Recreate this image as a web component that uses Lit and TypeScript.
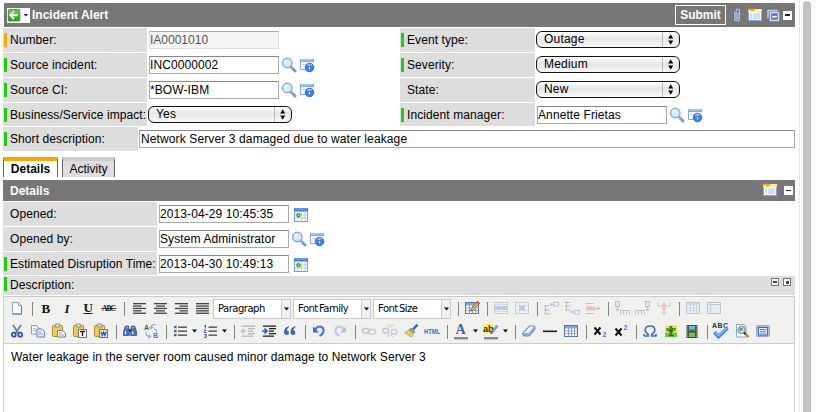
import { LitElement, html, svg, css, nothing, TemplateResult } from "lit";
import { customElement, property } from "lit/decorators.js";

const glyph = (body: unknown, w = 16, h = 16) =>
  html`<svg class="glyph" width=${w} height=${h} viewBox="0 0 ${w} ${h}">${body}</svg>`;

const lines = (rows: number[][], color = "#444") =>
  rows.map(([x, y, w]) => svg`<rect x=${x} y=${y} width=${w} height="1.3" fill=${color} />`);

const page = svg`<path d="M3.500 2.500h6l3 3v8.500h-9z" fill="#fff" stroke="#8aa6d0"/><path d="M9.500 2.500v3h3" fill="#dce8f8" stroke="#8aa6d0"/><path d="M3.500 14h9V6" fill="none" stroke="#5577b0"/>`;
const clipboard = svg`<rect x="1.500" y="2.500" width="10" height="11" rx="1" fill="#f3cb4b" stroke="#b08a2c"/><rect x="4" y="1" width="5" height="3" rx="1" fill="#ddd" stroke="#777" stroke-width=".8"/>`;
const grid = svg`<rect x="1.500" y="2.500" width="13" height="11" fill="#fff" stroke="#5874ad"/><rect x="2" y="3" width="12" height="2.500" fill="#8aa6d8"/><path d="M2 8h12M2 10.700h12M5.500 5v8.500M8.500 5v8.500M11.500 5v8.500" stroke="#7e9ace" stroke-width=".9"/>`;

const icons: Record<string, TemplateResult> = {
  search: glyph(svg`<path d="M9.500 9.500l4.500 4.500" stroke="#7f9cc4" stroke-width="3" stroke-linecap="round"/><path d="M10 10l1.500 1.500" stroke="#c9b7a0" stroke-width="1.500"/><circle cx="6.300" cy="6" r="4.700" fill="#d3ebfd" stroke="#7fabe6" stroke-width="1.400"/><path d="M3.800 5.500q.7-2 2.700-2" stroke="#fff" fill="none" stroke-width="1.300"/>`),
  info: glyph(svg`<path d="M1.500 12.500v-10h13v3M1.500 12.500h5" fill="none" stroke="#86a9dc"/><rect x="1" y="2" width="14" height="3" fill="#7fa8ea"/><path d="M2 3h12" stroke="#c9dcf8"/><path d="M3 7.500h4" stroke="#c5d8f3"/><circle cx="10.500" cy="10.500" r="4.300" fill="#3d7fe6" stroke="#2c68d2" stroke-width=".9"/><path d="M8 8.500q2-2.500 5-.5" stroke="#a9ccfa" fill="none"/><path d="M10.500 10v2.600M10.500 8v1.100" stroke="#d8e8ff" stroke-width="1.300"/>`),
  calendar: glyph(svg`<rect x="1.500" y="1.500" width="13" height="13" fill="#fff" stroke="#7b9fd8"/><rect x="1" y="1" width="14" height="3.500" fill="#4a7fd4"/><path d="M2 2h12" stroke="#88b0ee"/><path d="M2 8h12M2 11h12M5 5v9M8.500 5v9M12 5v9" stroke="#b9cfe9"/><rect x="3.500" y="6.300" width="4" height="4" rx="1" fill="#3e9b2f"/><rect x="5" y="7.600" width="1.400" height="1.400" fill="#c3f0b0"/>`),
  clip: glyph(svg`<path d="M5.500 5v6.500q0 2.500 2.500 2.500t2.500-2.500V4q0-1.800-1.700-1.800T7.100 4v7q0 1 .9 1t.9-1V5.500" fill="none" stroke="#a8c6f0" stroke-width="1.200"/><path d="M4.600 6v6" stroke="#3e5f93" stroke-width=".8"/>`),
  list: glyph(svg`<rect x="1.500" y="2.500" width="13" height="11" fill="#fff" stroke="#7ea8ea"/><rect x="1" y="2" width="14" height="2.800" fill="#ffe99b"/><path d="M1 2.500h7M4 3.500h3" stroke="#f5a623" stroke-width="1.400"/><path d="M3 7h2M6 7h7M3 9h2M6 9h7M3 11h2M6 11h7" stroke="#a9bce8" stroke-width="1.200"/>`),
  stack: glyph(svg`<path d="M3 11.500V3.500h9.500" fill="none" stroke="#b9d2f4" stroke-width="1.500"/><path d="M5.500 13.500v-8h8v8z" fill="#5e7ca6" stroke="#c8dcf7" stroke-width="1.500"/><path d="M7.300 9.700h4.500" stroke="#fff" stroke-width="1.600"/>`),
  back: glyph(svg`<rect width="23" height="15" fill="#fff"/><rect x=".8" y="1" width="12.500" height="12.500" rx="1.500" fill="#35a32a"/><rect x="1.500" y="1.500" width="11" height="5" rx="1" fill="#62bd50"/><path d="M7 3.300L3.200 7.200 7 11M3.500 7.200H11" fill="none" stroke="#fff" stroke-width="1.900"/><path d="M16.500 6h4.500l-2.200 2.600z" fill="#222"/>`, 23, 15),
  updown: glyph(svg`<path d="M2.200 6.500l2.500-4.300 2.500 4.300zM2.200 8.500l2.500 4.300 2.500-4.300z" fill="#000"/>`, 10, 15),
  caret: glyph(svg`<path d="M2 6.500h5l-2.500 3z" fill="#000"/>`, 9, 16),
  doc: glyph(page),
  bold: glyph(svg`<text x="3.500" y="12.500" class="serif b">B</text>`),
  italic: glyph(svg`<text x="5.500" y="12.500" class="serif b i">I</text>`),
  underline: glyph(svg`<text x="3.500" y="11.500" class="serif b">U</text><path d="M3.500 13.500h9" stroke="#222"/>`),
  strike: glyph(svg`<text x="1" y="11" class="serif abc" textLength="14">ABC</text><path d="M0 8.500h15.500" stroke="#222" stroke-width=".8"/>`),
  left: glyph(lines([[2, 3, 13], [2, 5.4, 8.500], [2, 7.8, 13], [2, 10.2, 8.500], [2, 12.600, 13]])),
  center: glyph(lines([[2, 3, 13], [4, 5.4, 9], [2, 7.8, 13], [4, 10.2, 9], [2, 12.600, 13]])),
  right: glyph(lines([[2, 3, 13], [6.500, 5.4, 8.500], [2, 7.8, 13], [6.500, 10.2, 8.500], [2, 12.600, 13]])),
  full: glyph(lines([[2, 3, 13], [2, 5.4, 13], [2, 7.8, 13], [2, 10.2, 13], [2, 12.600, 13]])),
  tableEdit: glyph(svg`${grid}<path d="M6.500 11l1-2.500 6-7 2 1.800-6.200 6.900z" fill="#eeb65c" stroke="#7a4b1e" stroke-width=".8"/><path d="M13.200 1.800l1.900 1.800" stroke="#d43b22" stroke-width="1.600"/>`),
  rowProps: glyph(svg`<rect x="1.500" y="2.500" width="13" height="11" fill="#fff" stroke="#6f86bd"/><path d="M2 4.500h12M2 11.500h12M6 3v3M10 3v3M6 10v3M10 10v3" stroke="#9aabda"/><rect x="2" y="6" width="12" height="4" fill="#5a82d8"/>`),
  cellProps: glyph(svg`<rect x="1.500" y="2.500" width="13" height="11" fill="#fff" stroke="#6f86bd"/><path d="M2 5.500h12M2 10.500h12M5.500 3v10M10.500 3v10" stroke="#9aabda"/><rect x="5.500" y="6" width="5" height="4" fill="#4a78d8"/>`),
  rowBefore: glyph(svg`<path d="M1 5.500h5M1 10h6M1 14h6M2.500 5v9" stroke="#555" fill="none"/><path d="M7 4.500h3M9 3l-2 1.500L9 6" stroke="#3e62b8" fill="none"/><rect x="10.500" y="2.500" width="5" height="3.500" fill="#fff" stroke="#3e62b8"/>`),
  rowAfter: glyph(svg`<path d="M1 2.500h5M1 6h6M1 10h5M2.500 2.500v7" stroke="#555" fill="none"/><path d="M6 12h4M8 10.500L6.500 12 8 13.500" stroke="#3e62b8" fill="none"/><rect x="10.500" y="10.500" width="5" height="3.500" fill="#fff" stroke="#3e62b8"/>`),
  rowDelete: glyph(svg`<path d="M1 3.500h8M1 13.500h8" stroke="#666"/><rect x="1" y="6.500" width="9" height="4" fill="#d66"/><path d="M10 8.500h5M12.500 6.500l2 2-2 2" stroke="#555" fill="none"/>`),
  colBefore: glyph(svg`<rect x="1.500" y="1.500" width="4" height="5" fill="#cfdcf5" stroke="#3e62b8"/><path d="M3.500 7v4M2 9l1.500 2L5 9" stroke="#3e62b8" fill="none"/><path d="M6.500 14.500v-4h9v4M9.500 10.500v4M12.500 10.500v4" stroke="#666" fill="none"/>`),
  colAfter: glyph(svg`<rect x="10.500" y="1.500" width="4" height="5" fill="#cfdcf5" stroke="#3e62b8"/><path d="M12.500 7v4M11 9l1.500 2L14 9" stroke="#3e62b8" fill="none"/><path d="M.5 14.500v-4h9v4M3.500 10.500v4M6.500 10.500v4" stroke="#666" fill="none"/>`),
  colDelete: glyph(svg`<path d="M2 2.500v3.500h4M14 2.500v3.500h-4" stroke="#666" fill="none"/><rect x="6.500" y="3" width="3" height="7" fill="#e05a5a"/><path d="M8 10v4.500M6 12.500l2 2 2-2" stroke="#555" fill="none"/>`),
  grid: glyph(grid),
  merge: glyph(svg`<rect x="1.500" y="2.500" width="13" height="11" fill="#fff" stroke="#4a68a8"/><path d="M2 4.500h12M4.500 3v10" stroke="#5f80c8"/><rect x="5" y="5" width="9" height="8" fill="#dfe8fa"/>`),
  cut: glyph(svg`<path d="M4 2l5.500 8M12 2L6.500 10" stroke="#6f7f99" stroke-width="1.700"/><circle cx="4.800" cy="11.700" r="2" fill="none" stroke="#2f55b0" stroke-width="1.700"/><circle cx="11.200" cy="11.700" r="2" fill="none" stroke="#2f55b0" stroke-width="1.700"/>`),
  copy: glyph(svg`<path d="M1.500 2.500h5l2.500 2.500v6h-7.500z" fill="#fff" stroke="#7d9de0"/><path d="M3 5.500h3M3 7.500h4" stroke="#9db8f0"/><path d="M7 6h5l2.500 2.500v5.500H7z" fill="#eef4ff" stroke="#5b80d0"/><path d="M8.500 9h3M8.500 11h4.500" stroke="#7c9ce4"/>`),
  paste: glyph(svg`${clipboard}<path d="M6.500 7.500h5l3 2.500v4h-8z" fill="#fff" stroke="#6c7a90"/><path d="M8 10h3M8 12h5" stroke="#999"/>`),
  pasteText: glyph(svg`${clipboard}<rect x="6.500" y="6.500" width="8" height="8" fill="#fff" stroke="#6c7a90"/><path d="M8 8.500h5M10.500 8.500v4.500" stroke="#222" stroke-width="1.400"/>`),
  pasteWord: glyph(svg`${clipboard}<rect x="6.500" y="6.500" width="8" height="8" fill="#e9f0ff" stroke="#5472b8"/><path d="M8 8.500l1.300 4 1.300-3.500 1.300 3.500 1.300-4" stroke="#2b4fb5" fill="none" stroke-width="1.200"/>`),
  find: glyph(svg`<path d="M3.500 3h3l.8 4v5.500H1.500V8.500zM9.500 3h3l2 5.500v4H8.700V7z" fill="#4a6fc0" stroke="#33528f" stroke-width=".8"/><path d="M3.500 8v3.500M10.800 8v3.500M4.500 4.500h1M10.500 4.500h1" stroke="#d7e4ff" stroke-width="1.300"/><path d="M7 7.500h2" stroke="#222" stroke-width="2"/>`),
  replace: glyph(svg`<text x="1" y="6.500" class="tiny">A</text><text x="10" y="15" class="tiny blue">B</text><path d="M12.500 1.500q-4-.5-4.500 3M6.500 4l1.500 1.500L10 4M3 9q-.5 4.500 4 4.500M5.500 12l2 1.500-2 1.500M11 6q3 .5 2.500 3.500" stroke="#8aa6e2" fill="none" stroke-width="1.100"/>`),
  bullets: glyph(svg`${lines([[6, 3.500, 9], [6, 7.5, 9], [6, 11.500, 9]])}<path d="M2 4.200h2.500M2 8.200h2.500M2 12.200h2.500" stroke="#4062b8" stroke-width="2.200"/>`),
  numbers: glyph(svg`${lines([[6.500, 3.500, 8.500], [6.500, 7.5, 8.500], [6.500, 11.500, 8.500]])}<path d="M3.500 2v3.500M2 3h1.500M2 7h2l-2 2.500h2.500M2 11.500h2.300v3H2M3 13h1" stroke="#4468c8" fill="none"/>`),
  outdent: glyph(svg`${lines([[2, 2.500, 13], [8, 5, 7], [8, 7.5, 5], [8, 10, 7], [2, 12.500, 11]])}<path d="M6 8H1.500M4 5.500L1.500 8 4 10.500" stroke="#3e68c8" fill="none" stroke-width="1.400"/>`),
  indent: glyph(svg`${lines([[2, 2.500, 13], [8, 5, 7], [8, 7.5, 5], [8, 10, 7], [2, 12.500, 11]], "#222")}<path d="M1 8h5M3.500 5.500L6 8l-2.500 2.500" stroke="#2f58c0" fill="none" stroke-width="1.700"/>`),
  quote: glyph(svg`<path d="M7 3Q2 4.500 2 9q0 3 2.500 3T7 9.800Q7 8 5 7.500 5 5 7 4zM13.500 3Q8.500 4.500 8.500 9q0 3 2.500 3t2.500-2.200Q13.500 8 11.500 7.500q0-2.500 2-3.500z" fill="#4666ac"/>`),
  undo: glyph(svg`<path d="M4 7Q5.500 3.500 9 3.500q3.500.5 3.500 4T8.500 13" stroke="#5379d8" stroke-width="2.200" fill="none"/><path d="M2 3.500v6h6z" fill="#4168cc"/>`),
  redo: glyph(svg`<path d="M12 7Q10.500 3.500 7 3.500q-3.500.5-3.500 4T7.500 13" stroke="#5379d8" stroke-width="2.200" fill="none"/><path d="M14 3.500v6H8z" fill="#4168cc"/>`),
  link: glyph(svg`<rect x="1.500" y="5.500" width="7" height="4.500" rx="2.200" fill="none" stroke="#5d78a8" stroke-width="1.700"/><rect x="7.500" y="6.500" width="7" height="4.500" rx="2.200" fill="none" stroke="#738cb8" stroke-width="1.700"/>`),
  unlink: glyph(svg`<rect x="1" y="5.500" width="5.500" height="4.500" rx="2" fill="none" stroke="#5d78a8" stroke-width="1.600"/><rect x="9.500" y="6.500" width="5.500" height="4.500" rx="2" fill="none" stroke="#738cb8" stroke-width="1.600"/><path d="M5 1.500l2 3M11 1.500l-2 3M5 14.500l2-3M11 14.500l-2-3M8 1v2" stroke="#666"/>`),
  brush: glyph(svg`<path d="M14.500 1.500L10 6.500" stroke="#4668a8" stroke-width="2.600"/><path d="M8 5l4 3.500-1.500 2L6 7z" fill="#8ba3c8" stroke="#596f92" stroke-width=".6"/><path d="M6 7l4.500 3.500L8.500 14 1.500 9.500z" fill="#f3db78" stroke="#a98a35" stroke-width=".7"/><path d="M4 9l3 3.500M5.500 8l3.500 3" stroke="#c29c3b" stroke-width=".7"/>`),
  html: glyph(svg`<text x="0" y="10.500" class="code" textLength="16" lengthAdjust="spacingAndGlyphs">HTML</text>`),
  color: glyph(svg`<text x="2.500" y="11" class="serif fore">A</text><rect x="1" y="14" width="14" height="2.500" fill="#8a8a8a"/>`),
  mark: glyph(svg`<rect x="0" y="1" width="10" height="9" fill="#fff04d"/><text x="0" y="8.500" class="ab">ab</text><path d="M14.500 2.500L8.500 10" stroke="#7b9ad0" stroke-width="2.600"/><path d="M9.500 8.500l-2 2.500" stroke="#333" stroke-width="1.200"/><rect x="1" y="14" width="14" height="2.500" fill="#8a8a8a"/>`),
  erase: glyph(svg`<path d="M8.500 3h5L14 6l-6 7H3l-1.500-2.500z" fill="#f8fbff" stroke="#6d8ecb" stroke-width="1.200"/><path d="M2 10.500h5L13.700 3.500" fill="none" stroke="#9ab3e0"/><path d="M3 13h5l6-7-1-2-5.500 6.500h-5z" fill="#5f82c4" opacity=".55"/>`),
  rule: glyph(svg`<rect x="1" y="7.500" width="14" height="1.600" fill="#222"/>`),
  sub: glyph(svg`<path d="M2.500 4.500l6 7M8.500 4.500l-6 7" stroke="#111" stroke-width="2"/><text x="10.500" y="14" class="tiny blue">2</text>`),
  sup: glyph(svg`<path d="M2.500 5.500l6 7M8.500 5.500l-6 7" stroke="#111" stroke-width="2"/><text x="10.500" y="6.500" class="tiny blue">2</text>`),
  omega: glyph(svg`<path d="M2 13h4.300v-1.500Q3.200 9.500 3.200 7 3.200 3 8 3t4.800 4q0 2.500-3.100 4.500V13H14v-2" fill="none" stroke="#4569cd" stroke-width="1.600"/><path d="M2 13v-2" stroke="#4569cd" stroke-width="1.600"/>`),
  tree: glyph(svg`<rect x="2" y="2.500" width="12" height="7" fill="#f5e52f"/><rect x="2" y="9.500" width="12" height="4.500" fill="#6cc83c"/><path d="M3.500 5h3V3h3v2h3v3h-2.500v1.500H6V8H3.500z" fill="#2a8a22"/><path d="M8 7v6M5.500 12.500h5" stroke="#553" stroke-width="1.400"/><path d="M5 6h1.500M9 4.500h1.500M10 7h1.500" stroke="#b5ec50"/>`),
  film: glyph(svg`<rect x="2.500" y="2" width="11" height="13" fill="#474747"/><rect x="5" y="3" width="6" height="5" fill="#79b4ef"/><rect x="5" y="6" width="6" height="2" fill="#4f9b34"/><rect x="5" y="9.500" width="6" height="4.500" fill="#6fc055"/><path d="M3.700 3v12M12.300 3v12" stroke="#bbb" stroke-width="1" stroke-dasharray="1.200 1.200"/>`),
  spell: glyph(svg`<text x="0" y="5.500" class="spell" textLength="16">ABC</text><path d="M2.500 10l4 4.500L15.500 6" fill="none" stroke="#2f74cf" stroke-width="3.600"/><path d="M3 10l3.500 3.800L15 6" fill="none" stroke="#74b6fa" stroke-width="2"/>`, 17, 18),
  preview: glyph(svg`<path d="M2.500 1.500h7l2.500 2.500v10h-9.500z" fill="#fff" stroke="#8ba6c8"/><circle cx="7.500" cy="7" r="3.700" fill="#b9def2" stroke="#5f84a8"/><path d="M5 7q1.500-3.500 4-1.500Q8 9.500 5 7" fill="#57a257"/><path d="M10.500 10l4 4" stroke="#c47f35" stroke-width="2.400"/><path d="M10 9.500l1.500 1.500" stroke="#334" stroke-width="2"/>`),
  screen: glyph(svg`<rect x="1.500" y="2.500" width="13" height="11" rx="1" fill="#b5c8ee" stroke="#98a7c6"/><rect x="3.500" y="4.500" width="9" height="7.500" fill="#fff" stroke="#3b66d4" stroke-width="1.200"/><path d="M5 6.500h6M5 8.300h6M5 10.100h6" stroke="#4471dd" stroke-width=".9"/>`),
};

const rowOne = ["doc", "|", "bold", "italic", "underline", "strike", "||", "left", "center", "right", "full",
  "=Paragraph", "=Font Family", "=Font Size", "|", "tableEdit", "|", "rowProps~", "cellProps~", "|",
  "rowBefore~", "rowAfter~", "rowDelete~", "|", "colBefore~", "colAfter~", "colDelete~", "|", "grid~", "merge~"];
const rowTwo = ["cut", "copy", "paste", "pasteText", "pasteWord", "|", "find", "replace", "|", "bullets", "v",
  "numbers", "v", "|", "outdent~", "indent", "quote", "|", "undo", "redo~", "|", "link~", "unlink~", "brush",
  "html", "|", "color", "v", "mark", "v", "|", "erase", "rule", "grid", "|", "sub", "sup", "|", "omega", "tree",
  "film", "|", "spell", "preview", "screen"];

@customElement("rich-toolbar")
class RichToolbar extends LitElement {
  @property({ attribute: false }) items: string[] = [];

  static styles = css`
    :host { display: flex; height: 23px; align-items: center; }
    .btn { width: 21px; height: 20px; flex: none; display: flex; align-items: center; justify-content: center;
      padding-bottom: 2px; box-sizing: border-box; }
    .off { opacity: .33; }
    .caret { width: 9px; height: 18px; flex: none; }
    .sep { width: 3px; height: 14px; flex: none; box-sizing: border-box; margin: 0 0 0 5px; border-left: 1px solid #848488; }
    .wide { width: 4px; }
    .pick { width: 78px; height: 20px; margin-right: 2px; box-sizing: border-box; flex: none; display: flex;
      align-items: center; justify-content: space-between; background: #fff; border: 1px solid #ccc; padding-left: 4px;
      font: 10px/18px "DejaVu Sans", Verdana, sans-serif; letter-spacing: -0.5px; word-spacing: -1.500px; white-space: nowrap; color: #000; }
    .drop { width: 8px; height: 18px; display: flex; align-items: center; background: #f0f0ee; border-left: 1px solid #ccc; }
    .full { margin-right: 1px; }
    .glyph { display: block; flex: none; overflow: visible; }
    .serif { font-family: "Liberation Serif", serif; fill: #111; }
    .b { font-weight: 700; font-size: 13px; }
    .i { font-style: italic; }
    .abc { font-size: 7.500px; font-weight: 700; }
    .tiny { font: 700 7px "Liberation Sans", sans-serif; fill: #555; }
    .blue { fill: #4b78dc; }
    .code { font: 700 6.500px "Liberation Sans", sans-serif; fill: #3c69c8; }
    .fore { font-size: 14px; font-weight: 700; fill: #4263a8; }
    .ab { font: 700 9px "Liberation Sans", sans-serif; fill: #222; }
    .spell { font: 700 7px "Liberation Sans", sans-serif; fill: #333; }
  `;

  render() {
    return this.items.map((item) => {
      if (item === "|") return html`<i class="sep"></i>`;
      if (item === "||") return html`<i class="sep wide"></i>`;
      if (item === "v") return html`<span class="caret">${icons.caret}</span>`;
      if (item.startsWith("="))
        return html`<span class="pick">${item.slice(1)}<b class="drop">${icons.caret}</b></span>`;
      const off = item.endsWith("~");
      const name = off ? item.slice(0, -1) : item;
      return html`<span class="btn ${off ? "off" : ""} ${name === "full" ? "full" : ""}">${icons[name]}</span>`;
    });
  }
}

type Field = { label: string; mark?: string; value: string; kind: string; tools?: string[] };

const leftFields: Field[] = [
  { label: "Number:", mark: "orange", value: "IA0001010", kind: "locked" },
  { label: "Source incident:", mark: "green", value: "INC0000002", kind: "open", tools: ["search", "info"] },
  { label: "Source CI:", mark: "green", value: "*BOW-IBM", kind: "open", tools: ["search", "info"] },
  { label: "Business/Service impact:", mark: "green", value: "Yes", kind: "select" },
];
const rightFields: Field[] = [
  { label: "Event type:", mark: "green", value: "Outage", kind: "select" },
  { label: "Severity:", mark: "green", value: "Medium", kind: "select" },
  { label: "State:", value: "New", kind: "select" },
  { label: "Incident manager:", mark: "green", value: "Annette Frietas", kind: "open", tools: ["search", "info"] },
];
const detailFields: Field[] = [
  { label: "Opened:", value: "2013-04-29 10:45:35", kind: "open", tools: ["calendar"] },
  { label: "Opened by:", value: "System Administrator", kind: "open", tools: ["search", "info"] },
  { label: "Estimated Disruption Time:", mark: "green", value: "2013-04-30 10:49:13", kind: "open", tools: ["calendar"] },
];

@customElement("app-root")
class AppRoot extends LitElement {
  static styles = css`
    :host { display: flex; height: 412px; overflow: hidden; background: #fff; color: #000;
      font: 12px/16px "Liberation Sans", Arial, sans-serif; white-space: nowrap; }
    .main { width: 792px; flex: none; padding: 3px 0 0 3px; display: flex; flex-direction: column; }
    .glyph { display: block; flex: none; }
    .bar { height: 24px; margin-left: 1px; background: #777; color: #fff; display: flex; align-items: center;
      font-weight: 700; padding: 0 3px; box-sizing: border-box; flex: none; }
    .title { margin-left: 2px; flex: 1; }
    .submit { width: 51px; height: 20px; box-sizing: border-box; border: 1px solid #fff; text-align: center;
      line-height: 18px; margin-right: 3px; }
    .bar .glyph + .glyph { margin-left: 2px; }
    .box { width: 9px; height: 9px; box-sizing: border-box; background: #fff; border: 1px solid #fff; display: flex;
      align-items: center; justify-content: center; flex: none; margin-left: 2px; }
    .box::after { content: ""; width: 5px; height: 1.5px; background: #222; }
    .columns { display: flex; margin-top: 1px; height: 98px; }
    .col { width: 397px; flex: none; display: grid; grid-template-rows: 24px 24px 24px 23px; row-gap: 1px; }
    .col.r { width: 395px; }
    .row { display: flex; }
    .label { width: 144px; box-sizing: border-box; background: #ddd; padding-left: 1px; display: flex; flex: none;
      align-items: center; letter-spacing: .09px; }
    .col.r .label { width: 135px; }
    .mark { width: 3px; height: 14px; margin-right: 3px; background: transparent; flex: none; }
    .green { background: #1fce0e; }
    .orange { background: #ffa500; }
    .input { width: 130px; height: 18px; margin: 3px 0 0 2px; box-sizing: border-box; background: #fff;
      border: 1px solid #aaa; border-top-color: #888; flex: none; line-height: 16px; letter-spacing: .1px; }
    .locked { background: #f4f4f4; border-color: #ddd; border-top-color: #aaa; color: #555; letter-spacing: 0; }
    .select { width: 144px; height: 17px; margin: 3px 0 0 1px; box-sizing: border-box; border: 1px solid #111;
      border-bottom-width: 1.5px; border-radius: 6px; background: linear-gradient(#fff, #e6e6e6 45%, #f8f8f8); display: flex;
      justify-content: space-between; padding-left: 7px; line-height: 14px; flex: none; letter-spacing: .2px; }
    .knob { width: 17px; border-left: 1px solid #bbb; padding-left: 3px; box-sizing: border-box; display: flex; }
    .tools { display: flex; gap: 2px; margin: 4px 0 0 2px; }
    .tools.single { margin: 5px 0 0 4px; }
    .short { display: flex; height: 24px; margin-top: 1px; flex: none; }
    .short .label { width: 135px; }
    .short .input { width: 656px; margin-left: 1px; padding-left: 1px; letter-spacing: 0.12px; }
    .tabs { display: flex; gap: 4px; height: 20px; margin-top: 6px; flex: none; }
    .tab { width: 53px; box-sizing: border-box; border: solid #666; border-width: 0 1px; border-top: 4px solid #ccc;
      background: #ddd; text-align: center; line-height: 16px; }
    .tab.on { width: 55px; background: #fff; border-top-color: #ffa500; font-weight: 700; }
    .bar.sub { height: 21px; margin: 3px 0 1px 0; padding: 0 2px 0 5px; }
    .bar.sub .glyph { margin-bottom: 2px; }
    .bar.sub .box { margin-left: 6px; }
    .details { display: grid; grid-template-rows: 24px 24px 23px; row-gap: 1px; margin-bottom: 1px; flex: none; }
    .details .label { width: 154px; }
    .desc { height: 19px; background: #ddd; display: flex; padding: 0 4px 0 1px; align-items: flex-start; flex: none; }
    .desc .mark { margin-top: 1px; }
    .desc span { flex: 1; line-height: 18px; letter-spacing: .09px; }
    .tog { width: 8px; height: 8px; box-sizing: border-box; border: 1px solid #777; background: #fff; margin: 2px 0 0 4px;
      display: grid; place-items: center; }
    .tog::after { content: ""; width: 4px; height: 1.5px; background: #444; }
    .tog.plus::after { width: 3px; height: 3px; }
    .editor { flex: 1; border: 1px solid #ccc; border-bottom: 0; margin-top: 1px; display: flex; flex-direction: column; }
    .bars { height: 46px; background: #f0f0ee; border-bottom: 1px solid #ccc; }
    .one { padding-left: 2px; }
    .two { padding-left: 2px; }
    .content { padding: 5px 7px; letter-spacing: .09px; }
    .gutter { flex: 1; margin-left: 4px; border-left: 1px solid #e8e8e8; background: #fafafa; padding: 1px 0 0 3px; }
    .thumb { width: 8px; height: 420px; border-radius: 4px; background: #c2c2c2; }
  `;

  field(f: Field) {
    const tools = f.tools ?? [];
    return html`<div class="row">
      <div class="label"><i class="mark ${f.mark ?? ""}"></i>${f.label}</div>
      ${f.kind === "select"
        ? html`<div class="select">${f.value}<span class="knob">${icons.updown}</span></div>`
        : html`<div class="input ${f.kind}">${f.value}</div>`}
      ${tools.length ? html`<div class="tools ${tools.length === 1 ? "single" : ""}">${tools.map((t) => icons[t])}</div>` : nothing}
    </div>`;
  }

  render() {
    return html`
      <div class="main">
        <div class="bar">${icons.back}<span class="title">Incident Alert</span><span class="submit">Submit</span>
          ${icons.clip}${icons.list}${icons.stack}<i class="box"></i></div>
        <div class="columns">
          <div class="col">${leftFields.map((f) => this.field(f))}</div>
          <div class="col r">${rightFields.map((f) => this.field(f))}</div>
        </div>
        <div class="short">
          <div class="label"><i class="mark green"></i>Short description:</div>
          <div class="input">Network Server 3 damaged due to water leakage</div>
        </div>
        <div class="tabs"><div class="tab on">Details</div><div class="tab">Activity</div></div>
        <div class="bar sub"><span class="title">Details</span>${icons.list}<i class="box"></i></div>
        <div class="details">${detailFields.map((f) => this.field(f))}</div>
        <div class="desc"><i class="mark green"></i><span>Description:</span><i class="tog"></i><i class="tog plus"></i></div>
        <div class="editor">
          <div class="bars">
            <rich-toolbar class="one" .items=${rowOne}></rich-toolbar>
            <rich-toolbar class="two" .items=${rowTwo}></rich-toolbar>
          </div>
          <div class="content">Water leakage in the server room caused minor damage to Network Server 3</div>
        </div>
      </div>
      <div class="gutter"><div class="thumb"></div></div>`;
  }
}
